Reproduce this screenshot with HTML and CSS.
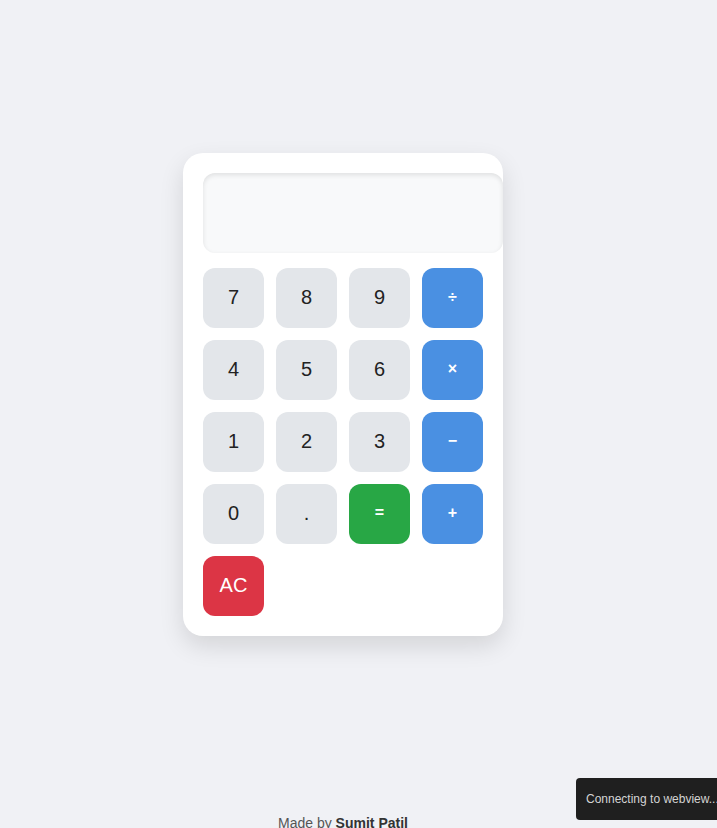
FILE: index.html
```html
<!DOCTYPE html>
<html lang="en">
<head>
<meta charset="utf-8">
<title>Calculator</title>
<link rel="stylesheet" href="styles.css">
</head>
<body>
<div class="page">
  <div class="calculator">
    <div class="display"></div>
    <div class="keys">
      <button class="key num">7</button>
      <button class="key num">8</button>
      <button class="key num">9</button>
      <button class="key op">÷</button>
      <button class="key num">4</button>
      <button class="key num">5</button>
      <button class="key num">6</button>
      <button class="key op">×</button>
      <button class="key num">1</button>
      <button class="key num">2</button>
      <button class="key num">3</button>
      <button class="key op">−</button>
      <button class="key num">0</button>
      <button class="key num">.</button>
      <button class="key eq">=</button>
      <button class="key op">+</button>
      <button class="key clear">AC</button>
    </div>
  </div>
  <footer class="footer">Made by <strong>Sumit Patil</strong></footer>
</div>
<div class="toast">Connecting to webview...</div>
</body>
</html>
```
FILE: styles.css
```css
html, body {
  margin: 0;
  padding: 0;
}
body {
  background: #f0f1f5;
  font-family: "Liberation Sans", Arial, sans-serif;
  overflow: hidden;
  height: 828px;
}
.page {
  width: 686px;
  display: flex;
  flex-direction: column;
  align-items: center;
  padding-top: 153px;
}
.calculator {
  width: 280px;
  padding: 20px;
  background: #ffffff;
  border-radius: 20px;
  box-shadow: 0 10px 25px rgba(0, 0, 0, 0.12);
}
.display {
  width: 100%;
  height: 60px;
  padding: 10px;
  background: #f8f9fa;
  border-radius: 12px;
  box-shadow: inset 0 2px 5px rgba(0, 0, 0, 0.1);
  margin-bottom: 15px;
}
.keys {
  display: grid;
  grid-template-columns: repeat(4, 1fr);
  gap: 12px;
}
.key {
  height: 60px;
  border: none;
  border-radius: 12px;
  font-family: "Liberation Sans", Arial, sans-serif;
  font-size: 20px;
  padding: 0 0 2px;
}
.num {
  background: #e3e6ea;
  color: #222222;
}
.op {
  background: #4a90e2;
  color: #ffffff;
  font-size: 16px;
  font-weight: bold;
}
.eq {
  background: #28a745;
  color: #ffffff;
  font-size: 16px;
  font-weight: bold;
}
.clear {
  background: #dc3545;
  color: #ffffff;
}
.footer {
  margin-top: 179px;
  font-size: 14px;
  line-height: 16px;
  color: #555555;
}
.footer strong {
  color: #333333;
}
.toast {
  position: fixed;
  left: 576px;
  top: 778px;
  width: 160px;
  height: 42px;
  box-sizing: border-box;
  padding: 0 10px;
  display: flex;
  align-items: center;
  background: #1f1f1f;
  color: #d4d4d4;
  font-family: "Liberation Sans", Arial, sans-serif;
  font-size: 12px;
  border-radius: 4px;
  white-space: nowrap;
  overflow: hidden;
}
```
